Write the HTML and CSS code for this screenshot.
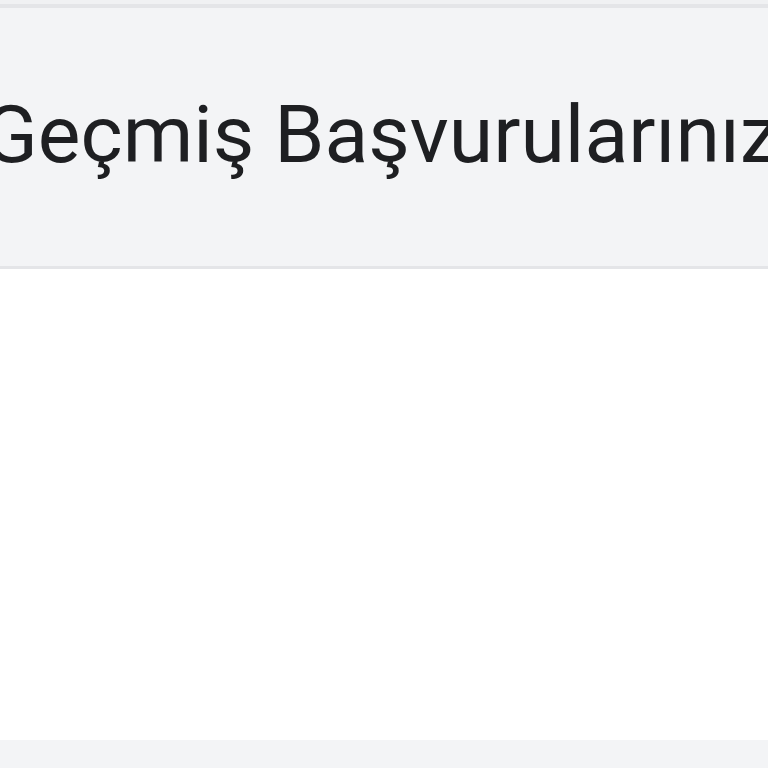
FILE: index.html
```html
<!DOCTYPE html>
<html lang="tr">
<head>
<meta charset="utf-8">
<link rel="stylesheet" href="styles.css">
<title>Geçmiş Başvurularınız</title>
</head>
<body>
<div class="page">
  <div class="top-gap"></div>
  <header class="section-head">
    <h2 class="title">Geçmiş Başvurularınız</h2>
  </header>
  <main class="content"></main>
  <footer class="next-head"></footer>
</div>
</body>
</html>
```
FILE: styles.css
```css
html, body {
  margin: 0;
  padding: 0;
  background: #ffffff;
  overflow: hidden;
}
.page {
  width: 768px;
  height: 768px;
  display: flex;
  flex-direction: column;
  overflow: hidden;
}
.top-gap {
  height: 4px;
  background: #f0f1f3;
}
.section-head {
  background: #f3f4f6;
  border-top: 4px solid #e4e5e8;
  border-bottom: 3px solid #e4e5e8;
  height: 254px;
  padding-bottom: 4px;
  display: flex;
  align-items: center;
  box-sizing: content-box;
  overflow: hidden;
}
.title {
  margin: 0 0 0 -17px;
  font-family: Roboto, "Noto Sans", sans-serif;
  font-weight: 400;
  font-size: 80.5px;
  line-height: 1;
  color: #1e1f22;
  white-space: nowrap;
}
.content {
  flex: 1;
  background: #ffffff;
}
.next-head {
  height: 28px;
  background: #f3f4f6;
}
```
